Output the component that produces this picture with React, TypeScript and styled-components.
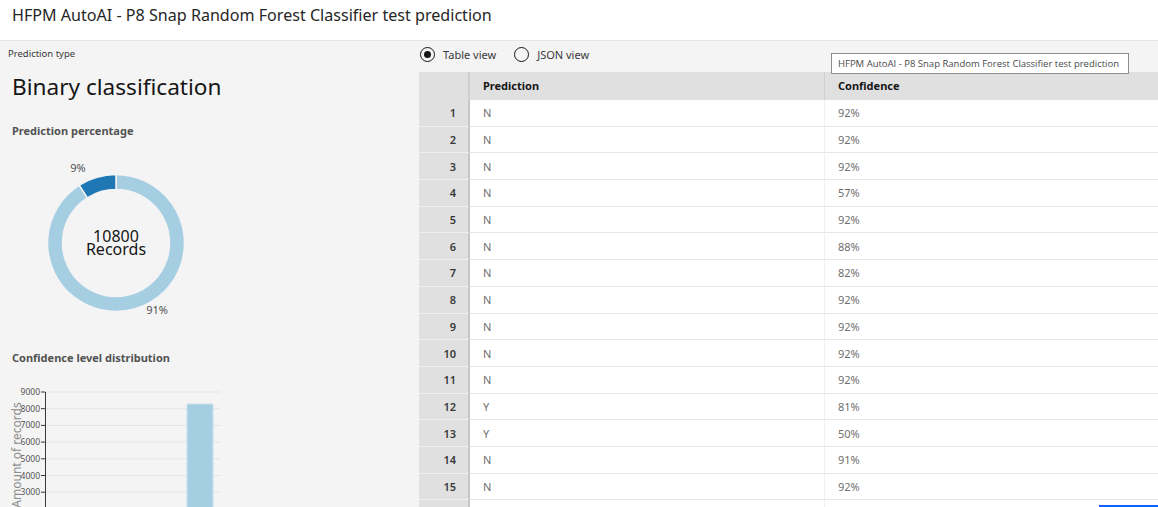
import React from "react";
import styled, { createGlobalStyle } from "styled-components";

const Global = createGlobalStyle`
  html, body { margin: 0; padding: 0; }
  body {
    font-family: "Noto Sans", "Open Sans", sans-serif;
    background: #f4f4f4;
    width: 1158px;
    height: 507px;
    overflow: hidden;
  }
  * { box-sizing: border-box; }
`;

const Page = styled.div`
  position: relative;
  width: 1158px;
  height: 507px;
  display: flex;
  flex-direction: column;
  overflow: hidden;
`;

const Header = styled.header`
  height: 41px;
  flex: 0 0 41px;
  background: #ffffff;
  border-bottom: 1px solid #e6e6e6;
  display: flex;
  align-items: center;
  padding: 0 0 10px 12px;
`;

const Title = styled.h1`
  margin: 0;
  font-size: 16.1px;
  font-weight: 400;
  color: #262626;
`;

const Body = styled.div`
  flex: 1;
  display: flex;
  background: #f4f4f4;
  overflow: hidden;
`;

const LeftPanel = styled.section`
  width: 419px;
  flex: 0 0 419px;
  display: flex;
  flex-direction: column;
  padding: 6px 0 0 8px;
  overflow: hidden;
`;

const SmallLabel = styled.div`
  font-size: 9.5px;
  color: #393939;
  height: 13px;
  line-height: 13px;
`;

const BigTitle = styled.div`
  font-size: 22.6px;
  color: #161616;
  margin: 12px 0 0 4px;
  line-height: 30px;
  height: 30px;
`;

const SectionTitle = styled.div<{ $mt: number }>`
  font-size: 11px;
  font-weight: 700;
  color: #525252;
  margin: ${(p) => p.$mt}px 0 0 4px;
  line-height: 15px;
  height: 15px;
`;

const DonutWrap = styled.div`
  margin: 22px 0 0 22px;
  width: 180px;
  height: 170px;
`;

const ChartWrap = styled.div`
  margin: 20px 0 0 -8px;
  width: 240px;
  height: 140px;
`;

const RightPanel = styled.section`
  flex: 1;
  display: flex;
  flex-direction: column;
  overflow: hidden;
  padding-top: 6px;
`;

const RadioRow = styled.div`
  display: flex;
  align-items: center;
  height: 17px;
  gap: 18px;
  padding-left: 1px;
  margin-bottom: 10px;
`;

const RadioItem = styled.label`
  display: flex;
  align-items: center;
  gap: 8px;
  font-size: 11px;
  color: #393939;
`;

const RadioCircle = styled.span<{ $checked?: boolean }>`
  width: 15px;
  height: 15px;
  border-radius: 50%;
  border: 1px solid #161616;
  display: flex;
  align-items: center;
  justify-content: center;
  background: #f4f4f4;
  &::after {
    content: "";
    width: 7px;
    height: 7px;
    border-radius: 50%;
    background: ${(p) => (p.$checked ? "#161616" : "transparent")};
  }
`;

const Table = styled.div`
  display: grid;
  grid-template-columns: 51px 355px 1fr;
  background: #ffffff;
`;

const HeadCell = styled.div<{ $divider?: string }>`
  height: 28px;
  background: #e0e0e0;
  font-size: 11px;
  font-weight: 700;
  color: #161616;
  display: flex;
  align-items: center;
  padding-left: 13px;
  border-right: ${(p) => p.$divider || "none"};
  border-bottom: 1px solid #e0e0e0;
`;

const NumCell = styled.div`
  height: 26.7px;
  background: #e0e0e0;
  border-right: 2px solid #c6c6c6;
  border-bottom: 1.5px solid #efefef;
  font-size: 11px;
  font-weight: 600;
  color: #393939;
  display: flex;
  align-items: center;
  justify-content: flex-end;
  padding-right: 12px;
`;

const DataCell = styled.div<{ $last?: boolean }>`
  height: 26.7px;
  background: #ffffff;
  border-bottom: 1.5px solid #e6e6e6;
  border-right: ${(p) => (p.$last ? "none" : "1px solid #f0f0f0")};
  font-size: 11px;
  color: #6f6f6f;
  display: flex;
  align-items: center;
  padding-left: 13px;
`;

const Tooltip = styled.div`
  position: absolute;
  left: 831px;
  top: 53px;
  width: 298px;
  height: 21px;
  background: #ffffff;
  border: 1px solid #8d8d8d;
  font-family: "Open Sans", "Noto Sans", sans-serif;
  font-size: 9.5px;
  color: #4a4a4a;
  display: flex;
  align-items: center;
  padding-left: 6px;
  white-space: nowrap;
`;

const BlueMark = styled.div`
  position: absolute;
  right: 0;
  bottom: 0;
  width: 59px;
  height: 2px;
  background: #0f62fe;
`;

type Row = { p: string; c: string };
const rows: Row[] = [
  { p: "N", c: "92%" },
  { p: "N", c: "92%" },
  { p: "N", c: "92%" },
  { p: "N", c: "57%" },
  { p: "N", c: "92%" },
  { p: "N", c: "88%" },
  { p: "N", c: "82%" },
  { p: "N", c: "92%" },
  { p: "N", c: "92%" },
  { p: "N", c: "92%" },
  { p: "N", c: "92%" },
  { p: "Y", c: "81%" },
  { p: "Y", c: "50%" },
  { p: "N", c: "91%" },
  { p: "N", c: "92%" },
];

function polar(cx: number, cy: number, r: number, deg: number) {
  const a = ((deg - 90) * Math.PI) / 180;
  return [cx + r * Math.cos(a), cy + r * Math.sin(a)];
}

function arcPath(cx: number, cy: number, ro: number, ri: number, a0: number, a1: number) {
  const large = a1 - a0 > 180 ? 1 : 0;
  const [x0, y0] = polar(cx, cy, ro, a0);
  const [x1, y1] = polar(cx, cy, ro, a1);
  const [x2, y2] = polar(cx, cy, ri, a1);
  const [x3, y3] = polar(cx, cy, ri, a0);
  return `M${x0},${y0} A${ro},${ro} 0 ${large} 1 ${x1},${y1} L${x2},${y2} A${ri},${ri} 0 ${large} 0 ${x3},${y3} Z`;
}

const Donut = () => {
  const cx = 86;
  const cy = 83;
  const ro = 68.5;
  const ri = 53.5;
  return (
    <svg width="180" height="170" viewBox="0 0 180 170">
      <path d={arcPath(cx, cy, ro, ri, 0, 327.6)} fill="#a6cee3" stroke="#f4f4f4" strokeWidth="1.5" />
      <path d={arcPath(cx, cy, ro, ri, 327.6, 360)} fill="#1f78b4" stroke="#f4f4f4" strokeWidth="1.5" />
      <text x="48" y="12" fontSize="11" fill="#525252" textAnchor="middle" fontFamily="Noto Sans, sans-serif">9%</text>
      <text x="127" y="154" fontSize="11" fill="#525252" textAnchor="middle" fontFamily="Noto Sans, sans-serif">91%</text>
      <text x={cx} y="82" fontSize="16" fill="#161616" textAnchor="middle" fontFamily="Noto Sans, sans-serif">10800</text>
      <text x={cx} y="95" fontSize="16" fill="#161616" textAnchor="middle" fontFamily="Noto Sans, sans-serif">Records</text>
    </svg>
  );
};

const BarChart = () => {
  const ticks = [9000, 8000, 7000, 6000, 5000, 4000, 3000];
  const y0 = 7;
  const step = 16.7;
  return (
    <svg width="240" height="140" viewBox="0 0 240 140">
      {ticks.map((t, i) => {
        const y = y0 + i * step;
        return (
          <g key={t}>
            <line x1="45" x2="220" y1={y} y2={y} stroke="#e4e4e4" strokeWidth="1" />
            <line x1="41" x2="45" y1={y} y2={y} stroke="#393939" strokeWidth="1" />
            <text x="40" y={y + 3} fontSize="8.5" fill="#525252" textAnchor="end" fontFamily="Noto Sans, sans-serif">{t}</text>
          </g>
        );
      })}
      <line x1="45.5" x2="45.5" y1={y0} y2="140" stroke="#393939" strokeWidth="1" />
      <rect x="187" y="19" width="26" height="130" fill="#a6cee3" stroke="#c9e1ee" strokeWidth="1" />
      <text
        x="0"
        y="0"
        fontSize="12"
        fill="#8d8d8d"
        textAnchor="middle"
        fontFamily="Noto Sans, sans-serif"
        transform="translate(21 70) rotate(-90)"
      >
        Amount of records
      </text>
    </svg>
  );
};

export default function App() {
  return (
    <>
      <Global />
      <Page>
        <Header>
          <Title>HFPM AutoAI - P8 Snap Random Forest Classifier test prediction</Title>
        </Header>
        <Body>
          <LeftPanel>
            <SmallLabel>Prediction type</SmallLabel>
            <BigTitle>Binary classification</BigTitle>
            <SectionTitle $mt={21}>Prediction percentage</SectionTitle>
            <DonutWrap>
              <Donut />
            </DonutWrap>
            <SectionTitle $mt={20}>Confidence level distribution</SectionTitle>
            <ChartWrap>
              <BarChart />
            </ChartWrap>
          </LeftPanel>
          <RightPanel>
            <RadioRow>
              <RadioItem>
                <RadioCircle $checked />
                Table view
              </RadioItem>
              <RadioItem>
                <RadioCircle />
                JSON view
              </RadioItem>
            </RadioRow>
            <Table>
              <HeadCell $divider="2px solid #cfcfcf" />
              <HeadCell $divider="1px solid #d0d0d0">Prediction</HeadCell>
              <HeadCell>Confidence</HeadCell>
              {rows.map((r, i) => (
                <React.Fragment key={i}>
                  <NumCell>{i + 1}</NumCell>
                  <DataCell>{r.p}</DataCell>
                  <DataCell $last>{r.c}</DataCell>
                </React.Fragment>
              ))}
              <NumCell />
              <DataCell />
              <DataCell $last />
            </Table>
          </RightPanel>
        </Body>
        <Tooltip>HFPM AutoAI - P8 Snap Random Forest Classifier test prediction</Tooltip>
        <BlueMark />
      </Page>
    </>
  );
}
